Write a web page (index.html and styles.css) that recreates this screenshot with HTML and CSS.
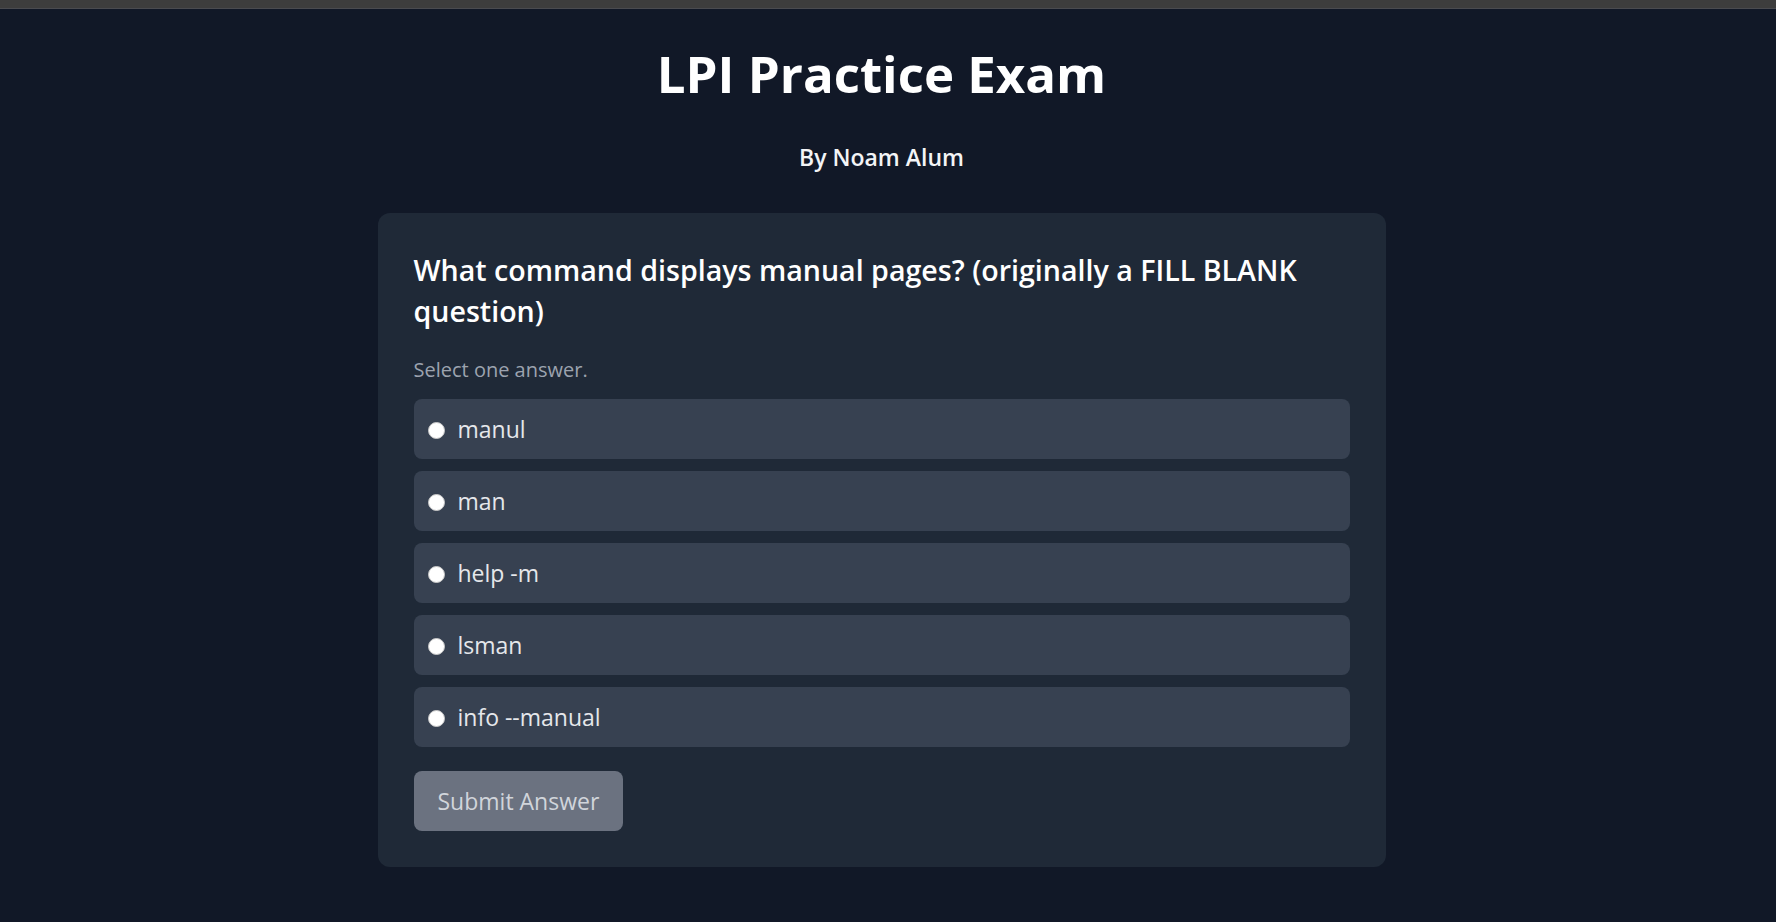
FILE: index.html
```html
<!DOCTYPE html>
<html lang="en">
<head>
<meta charset="utf-8">
<title>LPI Practice Exam</title>
<link rel="stylesheet" href="styles.css">
</head>
<body>
<div class="topbar"></div>
<main class="page">
  <h1 class="title">LPI Practice Exam</h1>
  <p class="byline">By Noam Alum</p>
  <section class="card">
    <h2 class="question">What command displays manual pages? (originally a FILL BLANK question)</h2>
    <p class="hint">Select one answer.</p>
    <div class="options">
      <label class="option"><input type="radio" name="a" class="radio"><span>manul</span></label>
      <label class="option"><input type="radio" name="a" class="radio"><span>man</span></label>
      <label class="option"><input type="radio" name="a" class="radio"><span>help -m</span></label>
      <label class="option"><input type="radio" name="a" class="radio"><span>lsman</span></label>
      <label class="option"><input type="radio" name="a" class="radio"><span>info --manual</span></label>
    </div>
    <button class="submit" type="button">Submit Answer</button>
  </section>
</main>
</body>
</html>
```

FILE: styles.css
```css
html, body {
  margin: 0;
  padding: 0;
  background: #111827;
  font-family: "Open Sans", "Noto Sans", sans-serif;
  color: #f9fafb;
  height: 100%;
  overflow: hidden;
}

.topbar {
  height: 8px;
  background: #3d3d3d;
  border-bottom: 1px solid #4a4b50;
}

.page {
  display: flex;
  flex-direction: column;
  align-items: center;
  padding: 33px 13px 0 0;
}

.title {
  margin: 0;
  font-size: 51px;
  line-height: 62px;
  font-weight: 700;
  color: #ffffff;
}

.byline {
  margin: 37px 0 0;
  font-size: 23px;
  line-height: 32px;
  font-weight: 600;
  color: #f3f4f6;
}

.card {
  margin-top: 40px;
  width: 1008px;
  box-sizing: border-box;
  padding: 36px;
  background: #1f2937;
  border-radius: 12px;
}

.question {
  margin: 0;
  font-size: 28.6px;
  line-height: 41px;
  font-weight: 600;
  color: #ffffff;
}

.hint {
  margin: 25px 0 0;
  font-size: 20px;
  line-height: 28px;
  color: #9ca3af;
}

.options {
  margin-top: 15px;
  display: flex;
  flex-direction: column;
  gap: 12px;
}

.option {
  display: flex;
  align-items: center;
  gap: 13px;
  height: 60px;
  padding: 0 14px;
  background: #374151;
  border-radius: 8px;
  font-size: 23px;
  color: #e5e7eb;
  cursor: pointer;
}

.radio {
  appearance: none;
  -webkit-appearance: none;
  margin: 2px 0 0;
  width: 17px;
  height: 17px;
  border-radius: 50%;
  background: #ffffff;
  border: 1px solid #c8c8c8;
  box-sizing: border-box;
  flex: none;
}

.submit {
  margin-top: 24px;
  height: 60px;
  padding: 0 24px;
  border: none;
  border-radius: 8px;
  background: #6b7280;
  color: #d1d5db;
  font-family: inherit;
  font-size: 23px;
}
```
